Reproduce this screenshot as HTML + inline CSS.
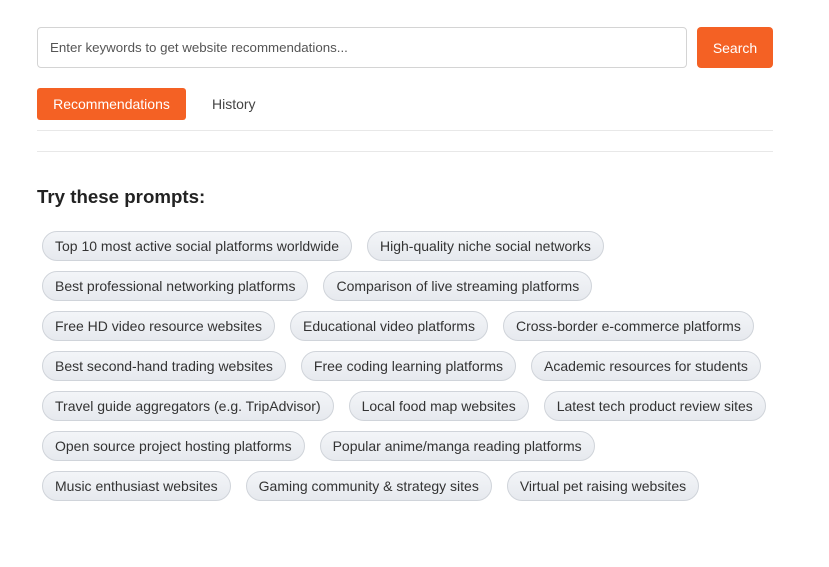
<!DOCTYPE html>
<html><head><style>
body{margin:0;background:#fff;font-family:"Liberation Sans",Arial,sans-serif;width:829px;height:567px;overflow:hidden;position:relative}
.inp{position:absolute;left:37px;top:27px;border:1px solid #d4d4d4;border-radius:4px;font-size:13.3px;color:#555;line-height:39px;padding-left:12px;box-sizing:border-box;width:650px;height:41px}
.btn{position:absolute;left:697px;top:27px;width:76px;height:41px;background:#f46124;color:#fff;border-radius:4px;font-size:14px;text-align:center;line-height:42px}
.tab1{position:absolute;left:37px;top:88px;width:149px;height:32px;background:#f46124;color:#fff;border-radius:3px;font-size:14px;text-align:center;line-height:32px}
.tab2{position:absolute;left:212px;top:88px;height:32px;line-height:32px;font-size:14px;color:#444}
.l1{position:absolute;left:37px;width:736px;height:1px;background:#e8e8e8}
h3{position:absolute;left:37px;top:186px;margin:0;font-size:18.7px;font-weight:bold;color:#222}
.chips{position:absolute;left:37px;top:226px;width:740px;display:flex;flex-wrap:wrap}
.c{margin:5px;height:30px;box-sizing:border-box;border:1px solid #d0d4da;border-radius:15px;background:linear-gradient(#f3f5f8,#e6e9ee);font-size:14px;color:#333;line-height:28px;padding:0 12px;white-space:nowrap;margin-right:10px}
</style></head><body>
<div class="inp">Enter keywords to get website recommendations...</div>
<div class="btn">Search</div>
<div class="tab1">Recommendations</div>
<div class="tab2">History</div>
<div class="l1" style="top:130px"></div>
<div class="l1" style="top:151px"></div>
<h3>Try these prompts:</h3>
<div class="chips">
<div class="c">Top 10 most active social platforms worldwide</div>
<div class="c">High-quality niche social networks</div>
<div class="c">Best professional networking platforms</div>
<div class="c">Comparison of live streaming platforms</div>
<div class="c">Free HD video resource websites</div>
<div class="c">Educational video platforms</div>
<div class="c">Cross-border e-commerce platforms</div>
<div class="c">Best second-hand trading websites</div>
<div class="c">Free coding learning platforms</div>
<div class="c">Academic resources for students</div>
<div class="c">Travel guide aggregators (e.g. TripAdvisor)</div>
<div class="c">Local food map websites</div>
<div class="c">Latest tech product review sites</div>
<div class="c">Open source project hosting platforms</div>
<div class="c">Popular anime/manga reading platforms</div>
<div class="c">Music enthusiast websites</div>
<div class="c">Gaming community &amp; strategy sites</div>
<div class="c">Virtual pet raising websites</div>
</div>
</body></html>
